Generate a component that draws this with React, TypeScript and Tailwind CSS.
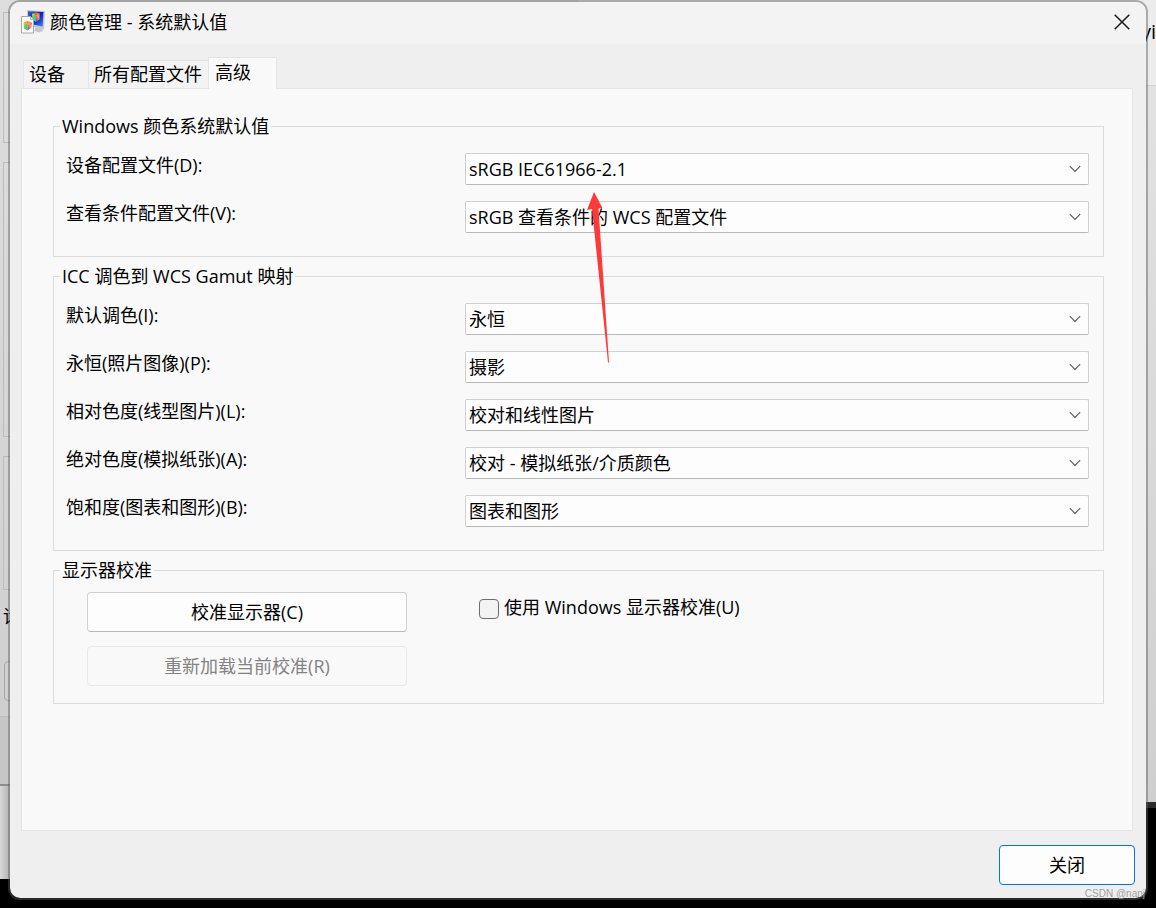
import React, { useState } from 'react';

// =============================================================================
// TYPES & DATA
// =============================================================================

interface ProfileSetting {
  id: string;
  label: string;
  options: string[];
}

const TABS = [
  { id: 'devices', label: '设备' },
  { id: 'profiles', label: '所有配置文件' },
  { id: 'advanced', label: '高级' },
];

const WCS_SETTINGS: ProfileSetting[] = [
  { id: 'device-profile', label: '设备配置文件(D):', options: ['sRGB IEC61966-2.1'] },
  { id: 'viewing-profile', label: '查看条件配置文件(V):', options: ['sRGB 查看条件的 WCS 配置文件'] },
];

const GAMUT_SETTINGS: ProfileSetting[] = [
  { id: 'default-intent', label: '默认调色(I):', options: ['永恒', '相对色度', '绝对色度', '饱和度'] },
  { id: 'perceptual', label: '永恒(照片图像)(P):', options: ['摄影'] },
  { id: 'relative', label: '相对色度(线型图片)(L):', options: ['校对和线性图片'] },
  { id: 'absolute', label: '绝对色度(模拟纸张)(A):', options: ['校对 - 模拟纸张/介质颜色'] },
  { id: 'saturation', label: '饱和度(图表和图形)(B):', options: ['图表和图形'] },
];

// =============================================================================
// ICONS
// =============================================================================

const ColorManagementIcon: React.FC = () => (
  <svg width="24" height="24" viewBox="0 0 24 24" aria-hidden="true">
    <defs>
      <linearGradient id="screen" x1="0" y1="0" x2="1" y2="1">
        <stop offset="0" stopColor="#2f5cdc" />
        <stop offset="0.5" stopColor="#0a1fc4" />
        <stop offset="1" stopColor="#3a8cf0" />
      </linearGradient>
      <linearGradient id="cubeLeft" x1="0" y1="0" x2="1" y2="1">
        <stop offset="0" stopColor="#ffe600" />
        <stop offset="0.5" stopColor="#3ee03a" />
        <stop offset="1" stopColor="#00d8e8" />
      </linearGradient>
      <linearGradient id="cubeRight" x1="1" y1="0" x2="0" y2="1">
        <stop offset="0" stopColor="#ff2a3c" />
        <stop offset="0.4" stopColor="#ffb02e" />
        <stop offset="0.7" stopColor="#f03ad8" />
        <stop offset="1" stopColor="#3a5cff" />
      </linearGradient>
    </defs>
    <path d="M14 17l7 1.500 1 2.500-3.500 1.500-5-1.500z" fill="#c4c7ca" />
    <path d="M6 0l18 1-1 18.500L6.500 15z" fill="#c3c8d0" />
    <path d="M7 1.200l15.500.8-.8 14.500L7.500 13.500z" fill="url(#screen)" />
    <path d="M11 3.500l4 1V12l-3.500-2z" fill="url(#cubeLeft)" />
    <path d="M15 4.500l4-1-.6 6L15 12z" fill="url(#cubeRight)" />
    <path d="M11 3.500l4.200-1 3.800 1-4 1z" fill="#ff6a2e" />
    <path d="M.5 6.500h9l3 3v13.500H.5z" fill="#fdfdfd" stroke="#a3a6aa" strokeWidth="1" />
    <path d="M9.500 6.500v3h3" fill="#e4e6e8" stroke="#a3a6aa" strokeWidth="0.8" />
    <path d="M2.500 12.500l4 1.500v6.500l-3.500-2z" fill="url(#cubeLeft)" />
    <path d="M6.500 14l4.500-1.500-.8 5.500-3.700 2.500z" fill="url(#cubeRight)" />
    <path d="M2.500 12.500l4-1.500 4.500 1.500L6.500 14z" fill="#ff8a2e" />
  </svg>
);

const CloseIcon: React.FC = () => (
  <svg width="16" height="16" viewBox="0 0 16 16" fill="none" stroke="#1a1a1a" strokeWidth="1.5" aria-hidden="true">
    <path d="M.7.7l14.600 14.600M15.300.7L.7 15.300" />
  </svg>
);

const ChevronIcon: React.FC = () => (
  <svg
    className="pointer-events-none absolute top-3 right-2"
    width="12"
    height="8"
    viewBox="0 0 12 8"
    fill="none"
    stroke="#5c5c5c"
    strokeWidth="1.2"
    aria-hidden="true"
  >
    <path d="M.8 1.200L6 6.400l5.200-5.200" />
  </svg>
);

// =============================================================================
// FORM PARTS
// =============================================================================

const SettingRow: React.FC<{ setting: ProfileSetting }> = ({ setting }) => (
  <div className="flex h-8">
    <label htmlFor={setting.id} className="w-[399px] shrink-0 leading-6">
      {setting.label}
    </label>
    <div className="relative flex-1">
      <select
        id={setting.id}
        className="h-8 w-full appearance-none rounded-[2px] border border-[#d0d0d0] border-b-[#b8b8b8] bg-[#fdfdfd] pr-8 pl-[3px]"
      >
        {setting.options.map((option) => (
          <option key={option}>{option}</option>
        ))}
      </select>
      <ChevronIcon />
    </div>
  </div>
);

const SettingGroup: React.FC<{ title: string; children: React.ReactNode }> = ({ title, children }) => (
  <fieldset className="border border-[#dcdcdc] pr-[14px] pl-3">
    <legend className="-ml-1.5 px-0.5 leading-6">{title}</legend>
    {children}
  </fieldset>
);

// =============================================================================
// WINDOWS BEHIND THE DIALOG
// =============================================================================

const BackgroundWindows: React.FC = () => (
  <div className="absolute inset-0 flex justify-between overflow-hidden bg-black" aria-hidden="true">
    <div className="flex w-1/2 flex-col">
      <div className="flex h-[786px] flex-col border-b-2 border-[#8c8c8c] bg-linear-to-b from-[#dedede] to-[#cecece] pt-3">
        <div className="ml-[3px] h-[131px] border border-[#bdbdbd]" />
        <div className="mt-[19px] ml-[3px] h-[275px] border border-[#bdbdbd]" />
        <div className="mt-[19px] ml-[3px] h-[134px] border border-[#bdbdbd]" />
        <div className="mt-3.5 ml-[3px] leading-6">请</div>
        <div className="mt-[33px] ml-1 h-10 rounded border border-[#a8a8a8]" />
        <div className="mt-[15px] flex-1 border-t border-[#bcbcbc] bg-[#c6c6c6]" />
      </div>
      <div className="h-[93px] bg-linear-to-r from-[#d8d8d8] to-[#a8a8a8] to-[12px]" />
    </div>
    <div className="flex w-1/2 flex-col">
      <div className="h-[86px] border-b border-[#d0d0d0] bg-[#ececec] pt-5 text-right text-xl leading-6">yi</div>
      <div className="h-[722px] border-b-[6px] border-[#2c2c2c] bg-linear-to-b from-[#e2e2e2] to-[#cfcfcf]" />
    </div>
  </div>
);

// =============================================================================
// COLOR MANAGEMENT DIALOG
// =============================================================================

const App: React.FC = () => {
  const [activeTab, setActiveTab] = useState('advanced');
  const [calibrate, setCalibrate] = useState(false);

  return (
    <div className="relative flex min-h-screen pr-2 pb-2 pl-2 font-['Open_Sans','Noto_Sans_CJK_SC',sans-serif] text-[18px] text-black">
      <BackgroundWindows />

      <main className="relative flex flex-1 flex-col rounded-[12px] border-2 border-[#5a5a5a]/45 bg-[#efefef] bg-clip-padding">
        {/* Title bar */}
        <header className="flex h-[42px] items-center rounded-t-[10px] bg-[#f3f3f3] pr-4 pb-0.5 pl-[11px]">
          <ColorManagementIcon />
          <h1 className="ml-[5px] flex-1">颜色管理 - 系统默认值</h1>
          <button type="button" aria-label="关闭窗口">
            <CloseIcon />
          </button>
        </header>

        <div className="flex flex-1 flex-col pt-[13px] pr-[13px] pl-[11px]">
          {/* Tabs */}
          <div role="tablist" className="flex items-end pl-0.5">
            {TABS.map((tab) => (
              <button
                key={tab.id}
                type="button"
                role="tab"
                aria-selected={tab.id === activeTab}
                onClick={() => setActiveTab(tab.id)}
                className={
                  tab.id === activeTab
                    ? 'relative -mb-px h-8 w-[69px] border border-b-0 border-[#e5e5e5] bg-[#f9f9f9] pb-1 pl-1.5 text-left leading-6'
                    : 'h-7 min-w-[65px] border border-r-0 border-b-0 border-[#e5e5e5] bg-[#f3f3f3] pr-1.5 pb-0.5 pl-[5px] text-left leading-6'
                }
              >
                {tab.label}
              </button>
            ))}
          </div>

          {/* Advanced panel */}
          <section
            role="tabpanel"
            className="flex flex-1 flex-col gap-[7px] border border-[#e5e5e5] bg-[#f9f9f9] pt-[25px] pr-7 pb-6 pl-[31px]"
          >
            <SettingGroup title="Windows 颜色系统默认值">
              <div className="flex flex-col gap-4 pt-[15px] pb-[23px]">
                {WCS_SETTINGS.map((setting) => (
                  <SettingRow key={setting.id} setting={setting} />
                ))}
              </div>
            </SettingGroup>

            <SettingGroup title="ICC 调色到 WCS Gamut 映射">
              <div className="flex flex-col gap-4 pt-[15px] pb-[23px]">
                {GAMUT_SETTINGS.map((setting) => (
                  <SettingRow key={setting.id} setting={setting} />
                ))}
              </div>
            </SettingGroup>

            <SettingGroup title="显示器校准">
              <div className="flex items-start gap-[72px] pt-2.5 pb-[17px] pl-[21px]">
                <div className="flex w-80 flex-col gap-3.5">
                  <button type="button" className="h-10 rounded border border-[#d0d0d0] border-b-[#b8b8b8] bg-[#fdfdfd]">
                    校准显示器(C)
                  </button>
                  <button type="button" disabled className="h-10 rounded border border-[#e8e8e8] bg-[#f9f9f9] text-[#838383]">
                    重新加载当前校准(R)
                  </button>
                </div>
                <label className="flex items-end gap-[5px] pt-[3px] leading-6">
                  <input
                    type="checkbox"
                    checked={calibrate}
                    onChange={(e) => setCalibrate(e.target.checked)}
                    className="size-5 appearance-none rounded border border-[#6e6e6e] bg-[#f3f3f3] checked:bg-[#0067c0]"
                  />
                  使用 Windows 显示器校准(U)
                </label>
              </div>
            </SettingGroup>
          </section>
        </div>

        {/* Footer */}
        <footer className="flex justify-end pt-3.5 pr-[11px] pb-[13px]">
          <button type="button" className="h-10 w-[136px] rounded border border-[#0078d4] bg-[#fdfdfd]">
            关闭
          </button>
        </footer>
      </main>

      {/* Arrow pointing at the device profile */}
      <svg
        className="pointer-events-none absolute top-[192px] left-[586px]"
        width="24"
        height="172"
        viewBox="0 0 24 172"
        fill="#fc3a3a"
        aria-hidden="true"
      >
        <path d="M8 0L16.500 16l-4 .5L23 170.500h-1L6 17l-5 1z" />
      </svg>

      <span className="absolute right-[11px] bottom-2 font-['Liberation_Sans',sans-serif] text-[10px] leading-3 text-[#a0a0a0]">
        CSDN @nanj
      </span>
    </div>
  );
};

export default App;
